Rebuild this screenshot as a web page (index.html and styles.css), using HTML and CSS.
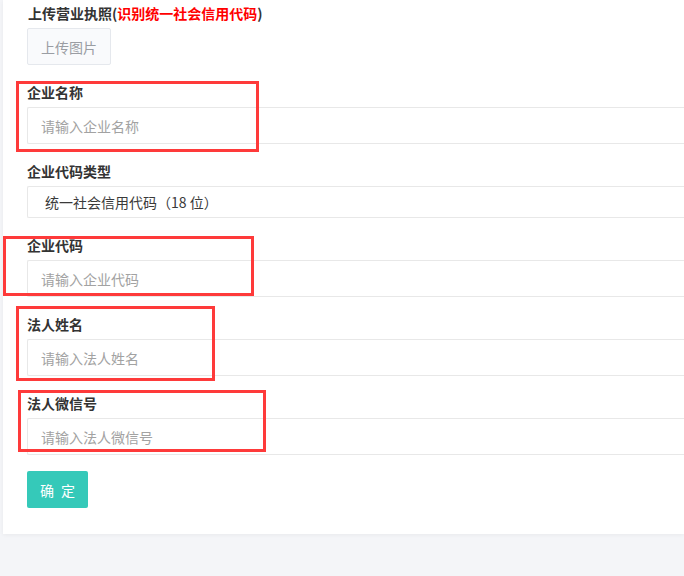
FILE: index.html
```html
<!DOCTYPE html>
<html lang="zh-CN">
<head>
<meta charset="utf-8">
<title>企业认证</title>
<link rel="stylesheet" href="styles.css">
</head>
<body>
<div class="page">
  <form class="card">
    <div class="title">上传营业执照(<span class="hint">识别统一社会信用代码</span>)</div>
    <button type="button" class="upload">上传图片</button>

    <div class="field">
      <label class="label">企业名称</label>
      <input class="input" type="text" placeholder="请输入企业名称">
    </div>

    <div class="field">
      <label class="label">企业代码类型</label>
      <div class="select">统一社会信用代码（18 位）</div>
    </div>

    <div class="field">
      <label class="label">企业代码</label>
      <input class="input" type="text" placeholder="请输入企业代码">
    </div>

    <div class="field">
      <label class="label">法人姓名</label>
      <input class="input" type="text" placeholder="请输入法人姓名">
    </div>

    <div class="field">
      <label class="label">法人微信号</label>
      <input class="input" type="text" placeholder="请输入法人微信号">
    </div>

    <button type="button" class="submit">确 定</button>
  </form>

  <div class="mark mark-1"></div>
  <div class="mark mark-2"></div>
  <div class="mark mark-3"></div>
  <div class="mark mark-4"></div>
</div>
</body>
</html>
```

FILE: styles.css
```css
html, body {
  margin: 0;
  padding: 0;
  background: #f4f5f8;
  overflow: hidden;
  font-family: "Noto Sans CJK SC", "Liberation Sans", sans-serif;
}

.page {
  position: relative;
  width: 684px;
  height: 576px;
}

.card {
  display: flex;
  flex-direction: column;
  align-items: flex-start;
  margin: 0 0 0 3px;
  width: 681px;
  background: #fff;
  padding: 3px 0 26px 24px;
  box-sizing: border-box;
  box-shadow: 0 1px 4px rgba(0, 0, 0, 0.05);
}

.title {
  font-size: 14px;
  line-height: 20px;
  font-weight: 700;
  color: #333;
  padding-left: 1px;
}

.hint {
  color: #ff0000;
}

.upload {
  margin-top: 5px;
  width: 84px;
  height: 37px;
  background: #f9fafc;
  border: 1px solid #e5e8ed;
  border-radius: 2px;
  color: #9a9da3;
  font-family: inherit;
  font-size: 14px;
  padding: 0;
}

.field {
  margin-top: 17px;
  display: flex;
  flex-direction: column;
  width: 100%;
}

.label {
  font-size: 14px;
  line-height: 20px;
  font-weight: 700;
  color: #333;
  margin-bottom: 5px;
}

.input {
  height: 37px;
  width: 100%;
  box-sizing: border-box;
  border: 1px solid #e8e8e8;
  border-right: none;
  border-radius: 2px 0 0 2px;
  padding: 0 13px;
  font-family: inherit;
  font-size: 14px;
  color: #333;
  outline: none;
}

.input::placeholder {
  color: #a2a2a2;
}

.select {
  height: 32px;
  box-sizing: border-box;
  border: 1px solid #e8e8e8;
  border-right: none;
  border-radius: 2px 0 0 2px;
  padding: 0 17px;
  font-size: 14px;
  line-height: 30px;
  color: #3a3a3a;
}

.submit {
  margin-top: 16px;
  width: 61px;
  height: 37px;
  background: #35c9b9;
  border: none;
  border-radius: 2px;
  color: #fff;
  font-family: inherit;
  font-size: 14px;
  font-weight: 400;
  letter-spacing: 2px;
  padding: 0 0 0 2px;
}

.mark {
  position: absolute;
  border: 3px solid #fe3a3a;
  box-sizing: border-box;
}

.mark-1 { left: 16px; top: 81px; width: 243px; height: 71px; }
.mark-2 { left: 3px;  top: 236px; width: 251px; height: 60px; }
.mark-3 { left: 16px; top: 306px; width: 199px; height: 75px; }
.mark-4 { left: 18px; top: 390px; width: 248px; height: 62px; }
```
